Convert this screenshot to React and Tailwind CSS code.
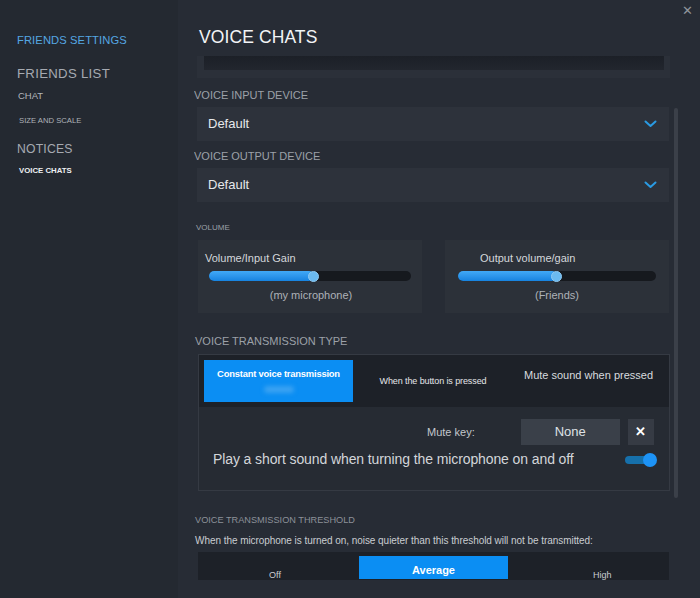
import React from "react";

function Chevron() {
  return (
    <svg width="13" height="8" viewBox="0 0 13 8" className="shrink-0">
      <polyline points="1.5,1.5 6.5,6 11.5,1.5" fill="none" stroke="#2a9be3" strokeWidth="2" strokeLinecap="round" strokeLinejoin="round" />
    </svg>
  );
}

function Dropdown() {
  return (
    <div className="ml-[3px] w-[472px] h-[34px] bg-[#2d323b] flex items-center justify-between pl-[11px] pr-[12px]">
      <span className="text-[13px] text-[#e6e8eb]">Default</span>
      <Chevron />
    </div>
  );
}

function Slider({ pct }) {
  return (
    <div className="relative h-[10px] rounded-full bg-[#16191e]">
      <div
        className="absolute left-0 top-0 h-[10px] rounded-full bg-gradient-to-b from-[#41a9f7] to-[#1683e0]"
        style={{ width: pct + "%" }}
      />
      <div
        className="absolute top-[-0.5px] w-[11px] h-[11px] rounded-full bg-[#6bbaf0] border border-[#8fcaf3]"
        style={{ left: `calc(${pct}% - 6px)` }}
      />
    </div>
  );
}

export default function App() {
  return (
    <div
      className="w-[700px] h-[598px] flex overflow-hidden bg-[#272c35]"
      style={{ fontFamily: '"Liberation Sans", Arial, sans-serif' }}
    >
      {/* Sidebar */}
      <div className="w-[178px] shrink-0 bg-[#242931] flex flex-col pl-[17px] pt-[33px]">
        <div className="text-[11.2px] leading-[14px] text-[#55a7e2] tracking-[0.1px]">FRIENDS SETTINGS</div>
        <div className="mt-[18px] text-[13.2px] leading-[17px] text-[#a6aab1] font-medium tracking-[0.3px]">FRIENDS LIST</div>
        <div className="mt-[8px] ml-[1px] text-[9.5px] leading-[12px] text-[#b3b7bd]">CHAT</div>
        <div className="mt-[14px] ml-[2px] text-[7.7px] leading-[10px] text-[#aeb2b8]">SIZE AND SCALE</div>
        <div className="mt-[15px] text-[12.2px] leading-[16px] text-[#a6aab1] tracking-[0.2px]">NOTICES</div>
        <div className="mt-[9px] ml-[2px] text-[7.8px] leading-[10px] text-[#eef0f2] font-bold">VOICE CHATS</div>
      </div>

      {/* Main */}
      <div className="relative flex-1 pl-[16px]">
        <div className="absolute right-[7px] top-[4px] text-[13px] leading-[14px] text-[#8f949b]">✕</div>
        <div className="absolute left-[496px] top-[108px] w-[4px] h-[390px] rounded-full bg-[#3b4049]" />

        <div className="w-[476px]">
          <div className="pt-[27px] h-[46px] pl-[5px] text-[17.5px] leading-[20px] text-[#f2f4f6] font-medium tracking-[0.1px]">VOICE CHATS</div>

          <div className="h-[534px] overflow-hidden">
            {/* clipped previous box */}
            <div className="mt-[10px] ml-[3px] w-[474px] h-[22px] bg-[#2b3039] px-[7px]">
              <div className="h-[14px] bg-gradient-to-b from-[#1c2027] to-[#22262e]" />
            </div>

            <div className="mt-[11px] h-[13px] text-[11px] leading-[13px] text-[#9ca1a8]">VOICE INPUT DEVICE</div>
            <div className="mt-[5px]"><Dropdown /></div>

            <div className="mt-[9px] h-[13px] text-[11px] leading-[13px] text-[#9ca1a8]">VOICE OUTPUT DEVICE</div>
            <div className="mt-[5px]"><Dropdown /></div>

            <div className="mt-[21px] ml-[2px] h-[10px] text-[8px] leading-[10px] text-[#9ca1a8]">VOLUME</div>

            <div className="mt-[7px] ml-[4px] flex gap-[23px]">
              <div className="w-[224px] h-[73px] bg-[#2c3139] px-[11px] pt-[12px]">
                <div className="text-[11px] leading-[13px] text-[#d4d7db] -ml-[4px]">Volume/Input Gain</div>
                <div className="mt-[6px]"><Slider pct={52} /></div>
                <div className="mt-[8px] text-center text-[11px] leading-[13px] text-[#aeb2b8] pl-[2px]">(my microphone)</div>
              </div>
              <div className="w-[224px] h-[73px] bg-[#2c3139] pl-[13px] pr-[13px] pt-[12px]">
                <div className="text-[11px] leading-[13px] text-[#d4d7db] pl-[22px]">Output volume/gain</div>
                <div className="mt-[6px]"><Slider pct={50} /></div>
                <div className="mt-[8px] text-center text-[11px] leading-[13px] text-[#aeb2b8]">(Friends)</div>
              </div>
            </div>

            <div className="mt-[22px] ml-[1px] h-[13px] text-[11px] leading-[13px] text-[#9ca1a8]">VOICE TRANSMISSION TYPE</div>

            <div className="mt-[6px] ml-[4px] w-[472px] h-[137px] border border-[#353a43] bg-[#262b33]">
              <div className="h-[52px] bg-[#1d2128] grid grid-cols-[149px_160px_1fr] px-[5px] pt-[5px] items-stretch">
                <div className="h-[42px] bg-[#0b8ef3] flex flex-col items-center pt-[8px]">
                  <div className="text-[9.4px] leading-[12px] font-bold text-white tracking-[-0.2px]">Constant voice transmission</div>
                  <div className="mt-[6px] w-[30px] h-[7px] rounded-full bg-[#3aa2f2] blur-[2px]" />
                </div>
                <div className="flex items-center justify-center pb-[4px] text-[9px] text-[#e4e6e9] tracking-[-0.1px]">When the button is pressed</div>
                <div className="flex justify-center pt-[9px] text-[11px] leading-[13px] text-[#d8dbdf]">Mute sound when pressed</div>
              </div>
              <div className="flex items-center mt-[12px] h-[26px]">
                <div className="ml-[228px] text-[11px] text-[#c3c7cc]">Mute key:</div>
                <div className="ml-[46px] w-[99px] h-[26px] bg-[#3a4049] flex items-center justify-center text-[13px] text-[#dfe2e6]">None</div>
                <div className="ml-[8px] w-[26px] h-[26px] bg-[#363b44] flex items-center justify-center text-[13px] font-bold text-white">✕</div>
              </div>
              <div className="flex items-center justify-between mt-[7px] pl-[14px] pr-[12px]">
                <div className="text-[14px] leading-[15px] text-[#d3d6da] tracking-[-0.1px]">Play a short sound when turning the microphone on and off</div>
                <div className="relative w-[32px] h-[14px] flex items-center">
                  <div className="w-[28px] h-[8px] rounded-full bg-[#1670ab]" />
                  <div className="absolute right-0 top-0 w-[14px] h-[14px] rounded-full bg-[#1d93f6]" />
                </div>
              </div>
            </div>

            <div className="mt-[23px] ml-[1px] h-[12px] text-[9.2px] leading-[12px] text-[#8c9199]">VOICE TRANSMISSION THRESHOLD</div>
            <div className="mt-[9px] ml-[1px] h-[12px] text-[10px] leading-[12px] text-[#c9ccd1] tracking-[-0.05px]">When the microphone is turned on, noise quieter than this threshold will not be transmitted:</div>

            <div className="mt-[5px] ml-[4px] w-[471px] h-[40px] bg-[#1d2128] flex pl-[6px] pt-[4px]">
              <div className="w-[142px] pt-[13px] text-center text-[9px] leading-[12px] text-[#c9ccd1]">Off</div>
              <div className="ml-[13px] w-[149px] h-[23px] bg-[#0b8ef3] flex justify-center pt-[8px] text-[11px] leading-[13px] font-bold text-white">Average</div>
              <div className="flex-1 pl-[85px] pt-[13px] text-[9px] leading-[12px] text-[#c9ccd1]">High</div>
            </div>
          </div>
        </div>
      </div>
    </div>
  );
}
